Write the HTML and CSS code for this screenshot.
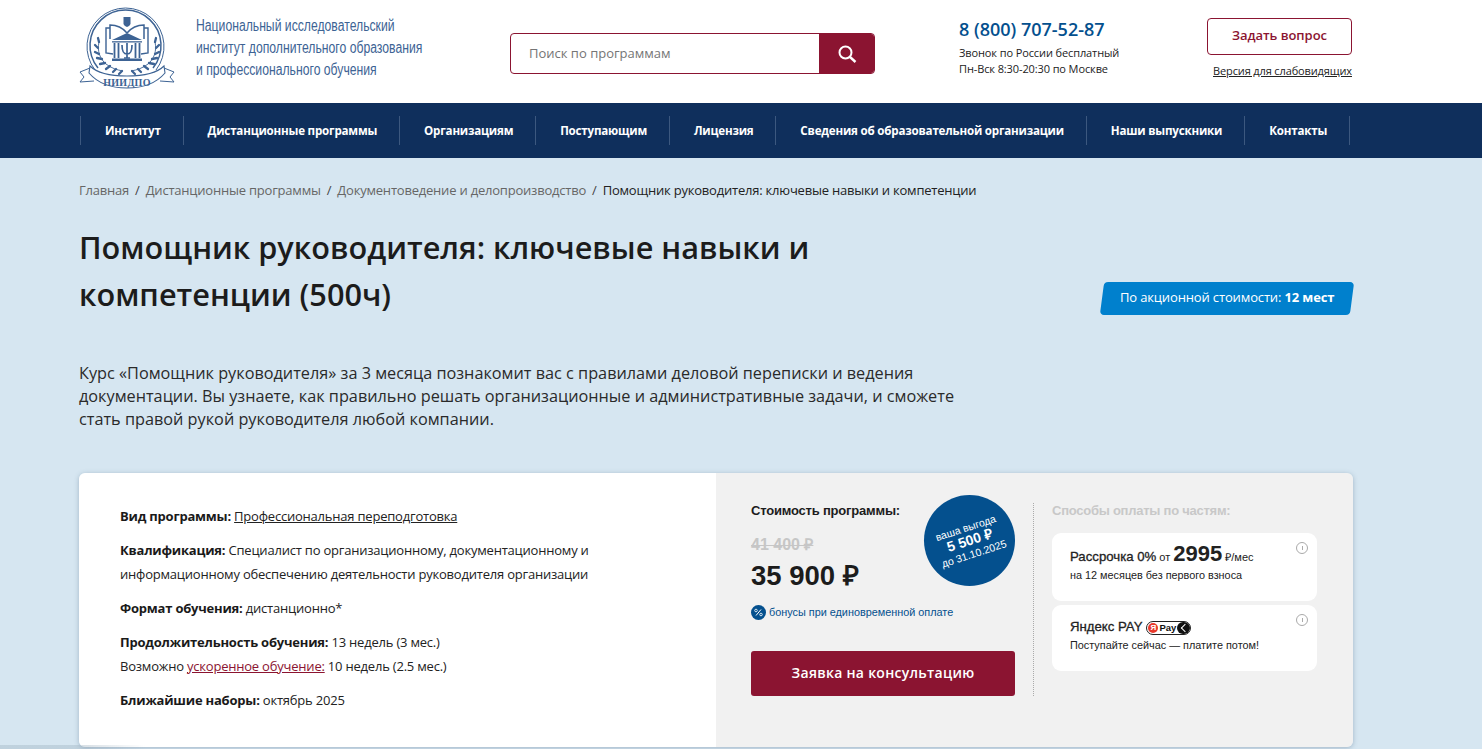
FILE: index.html
```html
<!DOCTYPE html>
<html lang="ru">
<head>
<meta charset="utf-8">
<title>Помощник руководителя</title>
<link rel="stylesheet" href="styles.css">
</head>
<body>
<header class="top">
  <div class="wrap top-in">
    <a class="brand">
      <svg class="logo" width="98" height="85" viewBox="0 0 98 85" fill="none" stroke="#3d6394">
        <path d="M16 65A38.500 38.500 0 1 1 77 65" stroke-width="1"/>
        <path d="M19 63A35.500 35.500 0 1 1 74 63" stroke-width="1.500"/>
        <path d="M44.500 12h7v7c-1 2-2 2.500-3.500 3-1.500-.5-2.500-1-3.500-3z" fill="#3d6394" stroke="none"/>
        <path d="M48 28c-5-6-11-8-17-8v14M48 28c5-6 11-8 17-8v14" stroke-width="1.500"/>
        <path d="M31 23h-4v25l7 1M65 23h4v25l-7 1" stroke-width="1.400"/>
        <path d="M33 35h30l-15-7z" fill="#3d6394" stroke="none"/>
        <path d="M33 36.200h30v1.300H33z" fill="#3d6394" stroke="none"/>
        <path d="M35.500 38v15M39.500 38v15M56.500 38v15M60.500 38v15" stroke-width="1.800"/>
        <path d="M43 40c0 7 1.500 9 5 9s5-2 5-9M48 38v15M45 53h6" stroke-width="1.700"/>
        <path d="M33 53.500h30V56H33z" fill="#3d6394" stroke="none"/>
        <path d="M20 37c-2 9 1 17 7 22 5 4 11 6 17 7M76 37c2 9-1 17-7 22-5 4-11 6-17 7" stroke-width=".9"/>
        <path d="M20 37l-1-4M19 43l-3-3M20 49l-4-2M23 54l-5-1M26 58l-5 1M31 61l-4 3M37 64l-3 3M43 66l-3 3M76 37l1-4M77 43l3-3M76 49l4-2M73 54l5-1M70 58l5 1M65 61l4 3M59 64l3 3M53 66l3 3" stroke-width="2.300" stroke-linecap="round"/>
        <path d="M11 63L1 67l4 5-4 5 14-1M85 63l10 4-4 5 4 5-14-1" fill="#fff" stroke-width="1"/>
        <path d="M11 61c6 6 16 10 37 10s31-4 37-10l1 7c-6 7-17 15-38 15S16 75 10 68z" fill="#fff" stroke-width="1.100"/>
        <text x="48" y="80.500" class="logo-txt" text-anchor="middle">НИИДПО</text>
      </svg>
      <span class="brand-txt">Национальный исследовательский<br>институт дополнительного образования<br>и профессионального обучения</span>
    </a>
    <form class="search">
      <span class="search-ph">Поиск по программам</span>
      <span class="search-btn">
        <svg width="20" height="20" viewBox="0 0 20 20" fill="none" stroke="#fff" stroke-width="2"><circle cx="8.500" cy="8.500" r="6"/><path d="M13 13l5.500 5" stroke-width="2.400"/></svg>
      </span>
    </form>
    <div class="phone">
      <div class="phone-num">8 (800) 707-52-87</div>
      <div class="phone-note">Звонок по России бесплатный<br>Пн-Вск 8:30-20:30 по Москве</div>
    </div>
    <div class="ask">
      <a class="ask-btn">Задать вопрос</a>
      <a class="ask-link">Версия для слабовидящих</a>
    </div>
  </div>
</header>

<nav class="nav">
  <ul class="wrap nav-list">
    <li>Институт</li>
    <li>Дистанционные программы</li>
    <li>Организациям</li>
    <li>Поступающим</li>
    <li>Лицензия</li>
    <li>Сведения об образовательной организации</li>
    <li>Наши выпускники</li>
    <li>Контакты</li>
  </ul>
</nav>

<main class="wrap main">
  <div class="crumbs">
    <a>Главная</a><i>/</i><a>Дистанционные программы</a><i>/</i><a>Документоведение и делопроизводство</a><i>/</i><b>Помощник руководителя: ключевые навыки и компетенции</b>
  </div>
  <div class="title-row">
    <h1>Помощник руководителя: ключевые навыки и компетенции (500ч)</h1>
    <div class="promo"><span class="promo-txt">По акционной стоимости: <b>12 мест</b></span></div>
  </div>
  <p class="lead">Курс «Помощник руководителя» за 3 месяца познакомит вас с правилами деловой переписки и ведения документации. Вы узнаете, как правильно решать организационные и административные задачи, и сможете стать правой рукой руководителя любой компании.</p>

  <section class="card">
    <div class="info">
      <p><b>Вид программы:</b> <u>Профессиональная переподготовка</u></p>
      <p><b>Квалификация:</b> Специалист по организационному, документационному и информационному обеспечению деятельности руководителя организации</p>
      <p><b>Формат обучения:</b> дистанционно*</p>
      <p><b>Продолжительность обучения:</b> 13 недель (3 мес.)<br>Возможно <u class="red">ускоренное обучение:</u> 10 недель (2.5 мес.)</p>
      <p><b>Ближайшие наборы:</b> октябрь 2025</p>
    </div>
    <div class="side">
      <div class="price">
        <div class="price-cap">Стоимость программы:</div>
        <div class="price-old">41 400 ₽</div>
        <div class="price-new">35 900 ₽</div>
        <div class="bonus">
          <svg width="15" height="15" viewBox="0 0 15 15"><circle cx="7.500" cy="7.500" r="7.500" fill="#04508e"/><path d="M10 4.500l-5 6" stroke="#fff" stroke-width="1"/><circle cx="5" cy="5.500" r="1.300" fill="none" stroke="#fff" stroke-width=".8"/><circle cx="10" cy="9.500" r="1.300" fill="none" stroke="#fff" stroke-width=".8"/></svg>
          <span>бонусы при единовременной оплате</span>
        </div>
        <div class="badge"><div class="badge-in"><span>ваша выгода</span><b>5 500 ₽</b><span>до 31.10.2025</span></div></div>
        <a class="cta">Заявка на консультацию</a>
      </div>
      <div class="pay">
        <div class="pay-cap">Способы оплаты по частям:</div>
        <div class="pay-card">
          <span class="i-dot"><i></i></span>
          <div class="pay-l1"><b>Рассрочка 0%</b> от <strong>2995</strong> ₽/мес</div>
          <div class="pay-l2">на 12 месяцев без первого взноса</div>
        </div>
        <div class="pay-card pay-card-y">
          <span class="i-dot"><i></i></span>
          <div class="pay-l1 y"><b>Яндекс PAY</b>
            <span class="ypay"><span class="ya">Я</span><span class="yt">Pay</span><span class="yc"></span></span>
          </div>
          <div class="pay-l2">Поступайте сейчас — платите потом!</div>
        </div>
      </div>
    </div>
  </section>
</main>
<div class="corner-shade"></div>
</body>
</html>
```

FILE: styles.css
```css
* { box-sizing: border-box; }
html, body { margin: 0; padding: 0; height: 749px; overflow: hidden; }
body { background: #d6e6f1; font-family: "Open Sans", sans-serif; color: #1c1c1c; }
.wrap { width: 1274px; margin-left: 79px; }

.top { background: #fff; height: 103px; }
.top-in { display: flex; height: 103px; align-items: flex-start; }
.brand { display: flex; width: 431px; padding-top: 5px; }
.logo { flex: none; display: block; }
.logo-txt { font-family: "Liberation Serif", serif; font-size: 10px; font-weight: 700; fill: #3d6394; stroke: none; letter-spacing: .3px; }
.brand-txt { margin-left: 19px; margin-top: 10px; font-family: "Liberation Sans", sans-serif; font-size: 16px; line-height: 22px; color: #3d6394; white-space: nowrap; transform: scaleX(.762); transform-origin: left top; width: 297px; flex: none; }
.search { display: flex; width: 365px; height: 41px; margin-top: 33px; border: 1px solid #8b1431; border-radius: 4px; overflow: hidden; }
.search-ph { flex: 1; padding-left: 18px; font-size: 13px; line-height: 39px; color: #757575; }
.search-btn { width: 55px; background: #8b1431; display: flex; align-items: center; justify-content: center; }
.phone { margin-left: 84px; padding-top: 17px; width: 248px; }
.phone-num { font-size: 18px; line-height: 24px; font-weight: 600; color: #04508e; }
.phone-note { margin-top: 4px; font-size: 11px; line-height: 16px; color: #222; letter-spacing: -.11px; }
.ask { width: 146px; padding-top: 18px; display: flex; flex-direction: column; align-items: flex-end; margin-left: -1px; }
.ask-btn { width: 145px; height: 37px; border: 1px solid #8b1431; border-radius: 4px; text-align: center; font-size: 13px; font-weight: 600; line-height: 33px; color: #8b1431; letter-spacing: -.05px; }
.ask-link { margin-top: 8px; font-size: 11px; line-height: 15px; color: #222; text-decoration: underline; white-space: nowrap; letter-spacing: -.13px; }

.nav { background: #0f2f5c; height: 55px; }
.nav-list { list-style: none; margin-top: 0; margin-bottom: 0; padding: 13px 0 0 1px; display: flex; height: 55px; }
.nav-list li { height: 29px; padding: 0 22px 0 23.900px; border-left: 1px solid #3c587f; font-size: 11.600px; line-height: 29px; font-weight: 700; color: #fff; white-space: nowrap; letter-spacing: -.2px; }
.nav-list li:last-child { border-right: 1px solid #3c587f; }

.crumbs { padding-top: 23px; font-size: 13px; line-height: 18px; color: #666; white-space: nowrap; letter-spacing: -.21px; }
.crumbs i { font-style: normal; margin: 0 6px; color: #444; }
.crumbs b { font-weight: 400; color: #222; }

.title-row { display: flex; justify-content: space-between; align-items: flex-end; margin-top: 25px; }
h1 { margin: 0; width: 800px; font-size: 30.700px; line-height: 47px; font-weight: 600; color: #1c1c1c; }
.promo { width: 250px; height: 33px; margin: 0 1px 0 0; background: #0080cd; border-radius: 4px; transform: skewX(-7.500deg); font-size: 13px; line-height: 31px; text-align: center; position: relative; top: -3px; }
.promo-txt { display: block; transform: skewX(7.500deg); color: #fff; letter-spacing: -.14px; }
.promo b { font-weight: 700; }

.lead { margin: 44px 0 0; width: 900px; font-size: 16.250px; line-height: 23px; color: #2a2a2a; }

.card { display: flex; margin-top: 42px; height: 274px; border-radius: 6px; overflow: hidden; box-shadow: 0 1px 5px rgba(60,90,120,.35); }
.info { width: 637px; background: #fff; padding: 31px 40px 0 41px; font-size: 13px; line-height: 24px; color: #222; letter-spacing: -.21px; }
.info p { margin: 0 0 10px; }
.info b { font-weight: 700; color: #1a1a1a; }
.info u { text-underline-offset: 1px; }
.info .red { color: #8b1431; }

.side { flex: 1; display: flex; background: #f1f1f1; font-family: "Liberation Sans", sans-serif; padding-top: 30px; }
.price { position: relative; width: 318px; height: 193px; padding-left: 35px; border-right: 1px dotted #aaa; }
.price-cap { font-size: 13px; line-height: 15px; font-weight: 700; color: #1c1c1c; letter-spacing: -.2px; }
.price-old { margin-top: 18px; font-size: 16px; line-height: 18px; font-weight: 700; color: #c6c6c6; text-decoration: line-through; }
.price-new { margin-top: 6px; font-size: 27.500px; line-height: 32px; font-weight: 700; color: #1c1c1c; }
.bonus { display: flex; align-items: center; gap: 3px; margin-top: 13px; font-size: 10.850px; line-height: 15px; color: #04508e; }
.badge { position: absolute; left: 208px; top: -8px; width: 91px; height: 91px; border-radius: 50%; background: #04508e; display: flex; align-items: center; justify-content: center; }
.badge-in { transform: rotate(-18deg); display: flex; flex-direction: column; align-items: center; color: #fff; font-size: 10.500px; line-height: 12px; }
.badge-in b { font-size: 14px; line-height: 15px; font-weight: 700; }
.cta { position: absolute; left: 35px; top: 148px; width: 264px; height: 45px; background: #8b1431; border-radius: 3px; color: #fff; font-family: "Open Sans", sans-serif; font-weight: 600; font-size: 14px; line-height: 44px; text-align: center; letter-spacing: .28px; }

.pay { margin-left: 18px; width: 265px; }
.pay-cap { font-size: 13px; line-height: 15px; font-weight: 700; color: #c8c8c8; letter-spacing: -.25px; }
.pay-card { position: relative; margin-top: 15px; height: 68px; background: #fff; border-radius: 9px; padding: 7px 18px 0; }
.pay-card-y { margin-top: 4px; height: 66px; padding-top: 13px; }
.pay-l1 { font-size: 11px; line-height: 28px; height: 28px; white-space: nowrap; color: #222; }
.pay-l1 b { font-size: 13.200px; font-weight: 400; -webkit-text-stroke: .3px #222; }
.pay-l1 strong { font-size: 22px; font-weight: 700; }
.pay-l1.y { display: flex; align-items: center; height: 18px; line-height: 18px; gap: 4px; }
.pay-l2 { font-size: 10.850px; line-height: 14px; color: #222; margin-top: 0; }
.pay-card-y .pay-l2 { margin-top: 2px; }
.i-dot { position: absolute; right: 9px; top: 9px; width: 12px; height: 12px; border: 1px solid #aaa; border-radius: 50%; display: flex; align-items: center; justify-content: center; }
.i-dot i { width: 1px; height: 4px; background: #aaa; }
.ypay { display: inline-flex; align-items: center; width: 45px; height: 14px; border: 1px solid #222; border-radius: 7px; background: #fff; position: relative; overflow: hidden; margin-top: 2px; }
.ya { width: 10px; height: 10px; margin-left: 1px; border-radius: 50%; background: #e8392b; color: #fff; font-size: 8px; line-height: 10px; text-align: center; font-weight: 700; }
.yt { margin-left: 1px; font-size: 9.500px; line-height: 12px; font-weight: 700; color: #111; }
.yc { position: absolute; right: 0; top: 0; width: 13px; height: 12px; background: #111; border-radius: 6px 0 0 6px; }
.yc::after { content: ""; position: absolute; left: 5px; top: 3px; width: 5px; height: 5px; border-left: 1.500px solid #fff; border-bottom: 1.500px solid #fff; transform: rotate(45deg); }

.corner-shade { position: fixed; left: 0; bottom: 0; width: 145px; height: 4px; background: linear-gradient(90deg, rgba(150,170,185,.35), rgba(150,170,185,.35) 60%, rgba(150,170,185,0)); }
```
